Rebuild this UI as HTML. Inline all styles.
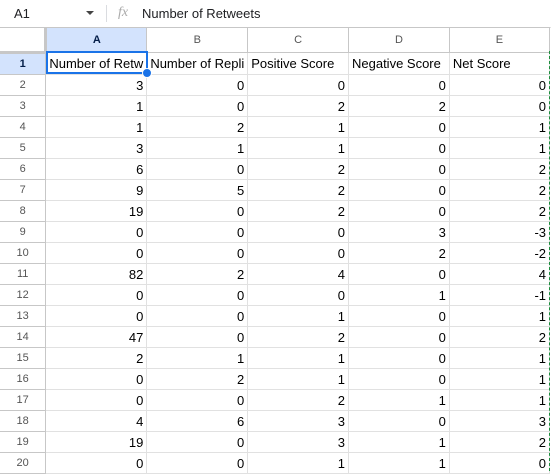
<!DOCTYPE html>
<html><head><style>
body{margin:0;width:551px;height:471px;overflow:hidden;background:#fff;font-family:"Liberation Sans",Arial,sans-serif;position:relative}
.top{position:absolute;left:0;top:0;width:551px;height:27px;border-bottom:1px solid #e1e1e1;font-size:13px;color:#202124}
.top .ref{position:absolute;left:14px;top:6px}
.top .arr{position:absolute;left:86px;top:11px;width:0;height:0;border-left:4px solid transparent;border-right:4px solid transparent;border-top:4px solid #444}
.top .sep{position:absolute;left:106px;top:5px;width:1px;height:17px;background:#dadce0}
.top .fx{position:absolute;left:118px;top:5px;font-style:italic;color:#aaa;font-family:"Liberation Serif",serif;font-size:14px}
.top .val{position:absolute;left:142px;top:6px}
table{position:absolute;left:-1px;top:27px;border-collapse:collapse;table-layout:fixed;font-size:13px;color:#000}
td{border:1px solid #e1e1e1;padding:0 3px;height:20px;white-space:nowrap;overflow:hidden;text-align:right}
tr.h td{height:23px;background:#fff;color:#555;font-size:11px;text-align:center;border-color:#c7c7c7}
td.rh{background:#fff;color:#555;font-size:11px;text-align:center;border-color:#c7c7c7}
tr.h td.sel,td.rh.sel{background:#d3e3fd;font-weight:bold;color:#041e49}
td.t{text-align:left}
td.corner{background:#f8f9fa;border-right:3px solid #c0c0c0;border-bottom:3px solid #c0c0c0}
.a1{position:absolute;left:46px;top:51px;width:98px;height:19px;border:2px solid #1a73e8}
.dot{position:absolute;left:142px;top:68px;width:8px;height:8px;border-radius:50%;background:#1a73e8;border:1px solid #fff}
.dash{position:absolute;left:549px;top:51px;height:420px;border-left:1px dashed #1e8e3e}
</style></head><body>
<div class="top"><span class="ref">A1</span><span class="arr"></span><span class="sep"></span><span class="fx">fx</span><span class="val">Number of Retweets</span></div>
<table>
<colgroup><col style="width:47px"><col style="width:101px"><col style="width:100px"><col style="width:101px"><col style="width:101px"><col style="width:101px"></colgroup>
<tr class="h"><td class="corner"></td><td class="sel">A</td><td>B</td><td>C</td><td>D</td><td>E</td></tr>
<tr><td class="rh sel">1</td><td class="t">Number of Retw</td><td class="t">Number of Repli</td><td class="t">Positive Score</td><td class="t">Negative Score</td><td class="t">Net Score</td></tr>
<tr><td class="rh">2</td><td>3</td><td>0</td><td>0</td><td>0</td><td>0</td></tr>
<tr><td class="rh">3</td><td>1</td><td>0</td><td>2</td><td>2</td><td>0</td></tr>
<tr><td class="rh">4</td><td>1</td><td>2</td><td>1</td><td>0</td><td>1</td></tr>
<tr><td class="rh">5</td><td>3</td><td>1</td><td>1</td><td>0</td><td>1</td></tr>
<tr><td class="rh">6</td><td>6</td><td>0</td><td>2</td><td>0</td><td>2</td></tr>
<tr><td class="rh">7</td><td>9</td><td>5</td><td>2</td><td>0</td><td>2</td></tr>
<tr><td class="rh">8</td><td>19</td><td>0</td><td>2</td><td>0</td><td>2</td></tr>
<tr><td class="rh">9</td><td>0</td><td>0</td><td>0</td><td>3</td><td>-3</td></tr>
<tr><td class="rh">10</td><td>0</td><td>0</td><td>0</td><td>2</td><td>-2</td></tr>
<tr><td class="rh">11</td><td>82</td><td>2</td><td>4</td><td>0</td><td>4</td></tr>
<tr><td class="rh">12</td><td>0</td><td>0</td><td>0</td><td>1</td><td>-1</td></tr>
<tr><td class="rh">13</td><td>0</td><td>0</td><td>1</td><td>0</td><td>1</td></tr>
<tr><td class="rh">14</td><td>47</td><td>0</td><td>2</td><td>0</td><td>2</td></tr>
<tr><td class="rh">15</td><td>2</td><td>1</td><td>1</td><td>0</td><td>1</td></tr>
<tr><td class="rh">16</td><td>0</td><td>2</td><td>1</td><td>0</td><td>1</td></tr>
<tr><td class="rh">17</td><td>0</td><td>0</td><td>2</td><td>1</td><td>1</td></tr>
<tr><td class="rh">18</td><td>4</td><td>6</td><td>3</td><td>0</td><td>3</td></tr>
<tr><td class="rh">19</td><td>19</td><td>0</td><td>3</td><td>1</td><td>2</td></tr>
<tr><td class="rh">20</td><td>0</td><td>0</td><td>1</td><td>1</td><td>0</td></tr>
</table>
<div class="a1"></div><div class="dot"></div><div class="dash"></div>
</body></html>
